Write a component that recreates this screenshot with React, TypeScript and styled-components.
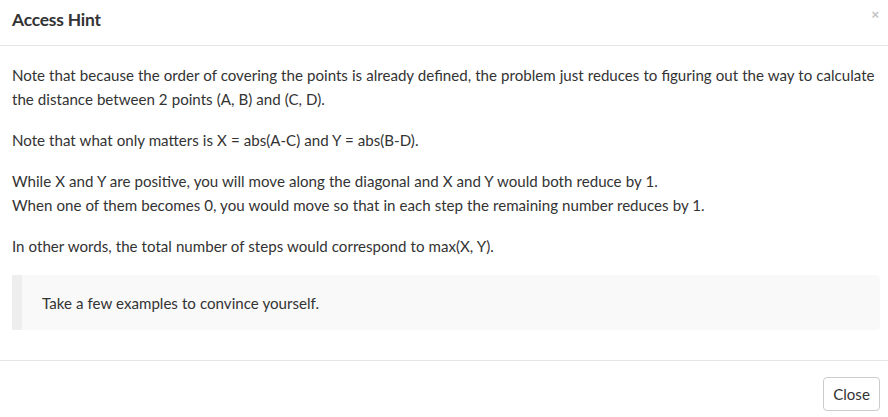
import React from "react";
import styled, { createGlobalStyle } from "styled-components";

const Global = createGlobalStyle`
  html, body { margin: 0; padding: 0; background: #fff; }
  body { font-family: "Lato", "Liberation Sans", sans-serif; color: #333; }
  * { box-sizing: border-box; }
`;

const Modal = styled.div`
  width: 888px;
  height: 417px;
  display: flex;
  flex-direction: column;
  background: #fff;
`;

const Header = styled.div`
  height: 46px;
  border-bottom: 1px solid #e5e5e5;
  display: flex;
  align-items: center;
  justify-content: space-between;
  padding: 0 9px 0 12px;
`;

const Title = styled.h4`
  margin: 0 0 6px 0;
  font-size: 17.4px;
  font-weight: 700;
  color: #333;
  letter-spacing: -0.2px;
`;

const CloseX = styled.button`
  border: 0;
  background: none;
  padding: 0;
  margin: 0 0 16px 0;
  font-size: 13px;
  line-height: 1;
  color: #c4c4c4;
  font-family: "Liberation Sans", sans-serif;
  font-weight: 700;
  cursor: pointer;
`;

const Body = styled.div`
  padding: 17px 8px 30px 12px;
`;

const Para = styled.p`
  margin: 0 0 17px 0;
  font-size: 15.1px;
  word-spacing: 0.2px;
  line-height: 24px;
  color: #333;
`;

const Quote = styled.blockquote`
  margin: 0;
  padding: 0 20px;
  height: 55px;
  display: flex;
  align-items: center;
  background: #f9f9f9;
  border-left: 10px solid #eee;
  border-radius: 0 4px 4px 0;
  font-size: 15.1px;
  word-spacing: 0.2px;
  color: #333;
`;

const Footer = styled.div`
  border-top: 1px solid #e5e5e5;
  padding: 16px 8px 0 0;
  display: flex;
  justify-content: flex-end;
`;

const Button = styled.button`
  height: 34px;
  width: 57px;
  padding: 0;
  background: #fff;
  border: 1px solid #ccc;
  border-radius: 4px;
  font-family: "Lato", "Liberation Sans", sans-serif;
  font-size: 15.1px;
  color: #333;
  cursor: pointer;
`;

export default function App() {
  return (
    <>
      <Global />
      <Modal>
        <Header>
          <Title>Access Hint</Title>
          <CloseX aria-label="Close">×</CloseX>
        </Header>
        <Body>
          <Para>
            Note that because the order of covering the points is already defined, the problem just reduces to figuring out the way to calculate the distance between 2 points (A, B) and (C, D).
          </Para>
          <Para>Note that what only matters is X = abs(A-C) and Y = abs(B-D).</Para>
          <Para>
            While X and Y are positive, you will move along the diagonal and X and Y would both reduce by 1.
            <br />
            When one of them becomes 0, you would move so that in each step the remaining number reduces by 1.
          </Para>
          <Para>In other words, the total number of steps would correspond to max(X, Y).</Para>
          <Quote>Take a few examples to convince yourself.</Quote>
        </Body>
        <Footer>
          <Button>Close</Button>
        </Footer>
      </Modal>
    </>
  );
}
